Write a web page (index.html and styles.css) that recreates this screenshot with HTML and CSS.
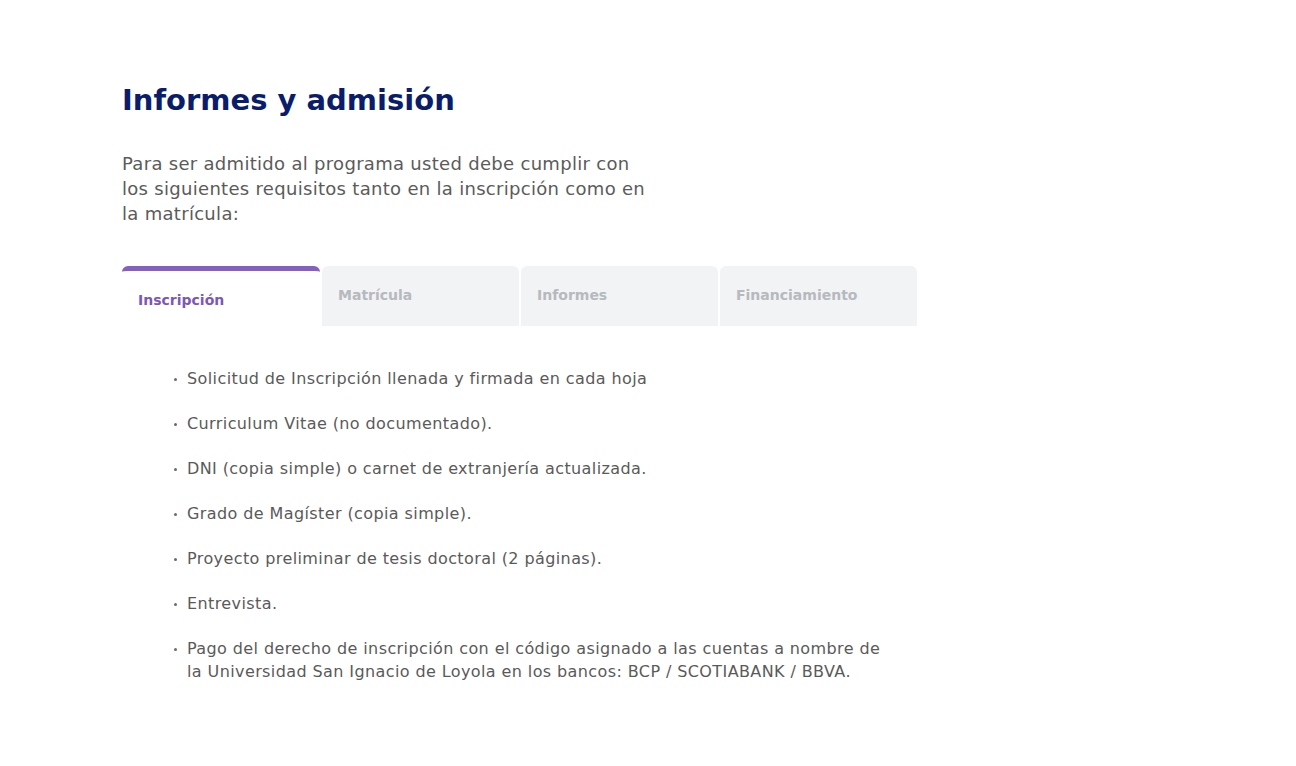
FILE: index.html
```html
<!DOCTYPE html>
<html lang="es">
<head>
<meta charset="utf-8">
<link rel="stylesheet" href="styles.css">
</head>
<body>
<main class="page">
  <h1 class="title">Informes y admisión</h1>
  <p class="intro">Para ser admitido al programa usted debe cumplir con los siguientes requisitos tanto en la inscripción como en la matrícula:</p>
  <div class="tabs">
    <div class="tab active">Inscripción</div>
    <div class="tab">Matrícula</div>
    <div class="tab">Informes</div>
    <div class="tab">Financiamiento</div>
  </div>
  <ul class="reqs">
    <li>Solicitud de Inscripción llenada y firmada en cada hoja</li>
    <li>Curriculum Vitae (no documentado).</li>
    <li>DNI (copia simple) o carnet de extranjería actualizada.</li>
    <li>Grado de Magíster (copia simple).</li>
    <li>Proyecto preliminar de tesis doctoral (2 páginas).</li>
    <li>Entrevista.</li>
    <li>Pago del derecho de inscripción con el código asignado a las cuentas a nombre de la Universidad San Ignacio de Loyola en los bancos: BCP / SCOTIABANK / BBVA.</li>
  </ul>
</main>
</body>
</html>
```
FILE: styles.css
```css
* { box-sizing: border-box; }
html, body { margin: 0; padding: 0; background: #fff; }
body { font-family: "DejaVu Sans", "Open Sans", sans-serif; color: #5a5a5a; }
.page { padding: 78px 0 0 122px; }
.title {
  margin: 0;
  font-size: 29px;
  line-height: 44px;
  font-weight: 700;
  color: #0a1d6b;
}
.intro {
  margin: 29px 0 0;
  width: 530px;
  font-size: 18px;
  line-height: 25px;
  letter-spacing: 0.3px;
  color: #5b5b5b;
}
.tabs {
  display: flex;
  gap: 2px;
  margin-top: 40px;
  width: 796px;
}
.tab {
  flex: 0 0 197px;
  height: 60px;
  background: #f1f3f5;
  border-radius: 6px 6px 0 0;
  padding: 21px 0 0 16px;
  font-size: 14px;
  font-weight: 700;
  color: #b6b9bd;
}
.tab.active {
  background: #fff;
  border-top: 5px solid #8560c0;
  padding-top: 21px;
  color: #7d57b8;
  flex-basis: 198px;
}
.reqs {
  margin: 41px 0 0;
  padding: 0 0 0 52px;
  list-style: none;
  width: 772px;
}
.reqs li {
  position: relative;
  padding-left: 13px;
  font-size: 16px;
  line-height: 23px;
  letter-spacing: 0.4px;
  margin-bottom: 22px;
  color: #5a5a5a;
}
.reqs li::before {
  content: "";
  position: absolute;
  left: 0;
  top: 11px;
  width: 3px;
  height: 3px;
  border-radius: 50%;
  background: #6a6a6a;
}
```
